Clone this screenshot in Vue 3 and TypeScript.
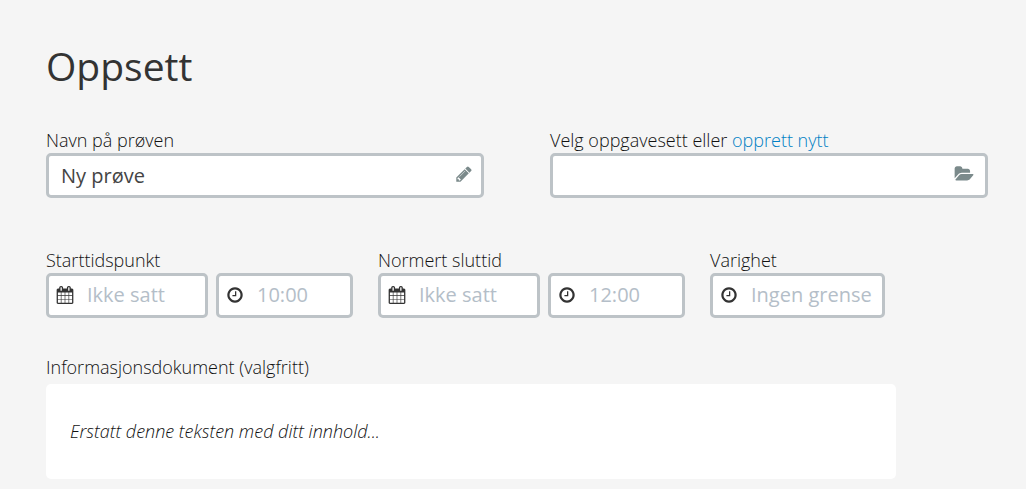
<script setup lang="ts">
import { ref } from 'vue'

interface TimeGroup {
  id: string
  label: string
  date: string
  time: string
}

const testName = ref('Ny prøve')
const taskSet = ref('')
const duration = ref('')
const intro = ref('Erstatt denne teksten med ditt innhold...')

const groups: TimeGroup[] = [
  { id: 'start', label: 'Starttidspunkt', date: 'Ikke satt', time: '10:00' },
  { id: 'end', label: 'Normert sluttid', date: 'Ikke satt', time: '12:00' },
]

const calendarPath =
  'M192 1664h288v-288h-288v288zm352 0h320v-288h-320v288zm-352-352h288v-320h-288v320zm352 0h320v-320h-320v320zm-352-384h288v-288h-288v288zm736 736h320v-288h-320v288zm-384-736h320v-288h-320v288zm768 736h288v-288h-288v288zm-384-352h320v-320h-320v320zm-352-864v-288q0-13-9.5-22.5t-22.5-9.5h-64q-13 0-22.5 9.5t-9.5 22.5v288q0 13 9.5 22.5t22.5 9.5h64q13 0 22.5-9.5t9.5-22.5zm736 864h288v-320h-288v320zm-384-384h320v-288h-320v288zm384 0h288v-288h-288v288zm32-480v-288q0-13-9.5-22.5t-22.5-9.5h-64q-13 0-22.5 9.5t-9.5 22.5v288q0 13 9.5 22.5t22.5 9.5h64q13 0 22.5-9.5t9.5-22.5zm384-64v1280q0 52-38 90t-90 38h-1408q-52 0-90-38t-38-90v-1280q0-52 38-90t90-38h128v-96q0-66 47-113t113-47h64q66 0 113 47t47 113v96h384v-96q0-66 47-113t113-47h64q66 0 113 47t47 113v96h128q52 0 90 38t38 90z'
const clockPath =
  'M1024 544v448q0 14-9 23t-23 9h-320q-14 0-23-9t-9-23v-64q0-14 9-23t23-9h224v-352q0-14 9-23t23-9h64q14 0 23 9t9 23zm416 352q0-148-73-273t-198-198-273-73-273 73-198 198-73 273 73 273 198 198 273 73 273-73 198-198 73-273zm224 0q0 209-103 385.5t-279.5 279.5-385.5 103-385.5-103-279.5-279.5-103-385.5 103-385.5 279.5-279.5 385.5-103 385.5 103 279.5 279.5 103 385.5z'
</script>

<template>
  <main class="page">
    <h1 class="title">Oppsett</h1>

    <form class="form" @submit.prevent>
      <div class="columns">
        <div class="field">
          <label class="label" for="test-name">Navn på prøven</label>
          <div class="box box-wide">
            <input id="test-name" v-model="testName" class="input" type="text" />
            <svg class="icon icon-muted" viewBox="0 0 1792 1792" aria-hidden="true">
              <path d="M491 1536l91-91-235-235-91 91v107h128v128h107zm523-928q0-22-22-22-10 0-17 7l-542 542q-7 7-7 17 0 22 22 22 10 0 17-7l542-542q7-7 7-17zm-54-192l416 416-832 832h-416v-416zm683 96q0 53-37 90l-166 166-416-416 166-165q36-38 90-38 53 0 91 38l235 234q37 39 37 91z" />
            </svg>
          </div>
        </div>
        <div class="field">
          <div class="label">
            <label for="task-set">Velg oppgavesett eller</label>
            {{ ' ' }}<a class="link" href="#new">opprett nytt</a>
          </div>
          <div class="box box-wide">
            <input id="task-set" v-model="taskSet" class="input" type="text" />
            <svg class="icon icon-muted icon-folder" viewBox="0 0 1991 1792" aria-hidden="true">
              <path d="M1943 952q0 31-31 66l-336 396q-43 51-120.5 86.5t-143.5 35.5h-1088q-34 0-60.5-13t-26.5-43q0-31 31-66l336-396q43-51 120.5-86.5t143.5-35.5h1088q34 0 60.5 13t26.5 43zm-343-344v160h-832q-94 0-197 47.5t-164 119.5l-337 396-5 6q0-4-.5-12.5t-.5-12.5v-960q0-92 66-158t158-66h320q92 0 158 66t66 158v32h544q92 0 158 66t66 158z" />
            </svg>
          </div>
        </div>
      </div>

      <div class="times">
        <div v-for="g in groups" :key="g.id" class="field">
          <label class="label" :for="g.id + '-date'">{{ g.label }}</label>
          <div class="pair">
            <div class="box box-date">
              <svg class="icon" viewBox="0 0 1792 1792" aria-hidden="true"><path :d="calendarPath" /></svg>
              <input :id="g.id + '-date'" class="input" type="text" :placeholder="g.date" />
            </div>
            <div class="box box-time">
              <svg class="icon" viewBox="0 0 1792 1792" aria-hidden="true"><path :d="clockPath" /></svg>
              <input class="input" type="text" :placeholder="g.time" :aria-label="g.label" />
            </div>
          </div>
        </div>
        <div class="field">
          <label class="label" for="duration">Varighet</label>
          <div class="box box-duration">
            <svg class="icon" viewBox="0 0 1792 1792" aria-hidden="true"><path :d="clockPath" /></svg>
            <input id="duration" v-model="duration" class="input" type="text" placeholder="Ingen grense" />
          </div>
        </div>
      </div>

      <div class="field">
        <label class="label" for="intro">Informasjonsdokument (valgfritt)</label>
        <textarea id="intro" v-model="intro" class="editor" rows="1"></textarea>
      </div>
    </form>
  </main>
</template>

<style>
body {
  background: #f5f5f5;
}
</style>

<style scoped>
.page {
  padding: 40px 38px 10px 46px;
  color: #333;
  font-family: 'Open Sans', 'Noto Sans', sans-serif;
  font-size: 18px;
}

.title {
  margin: 0 0 36px;
  font-size: 39px;
  line-height: 52px;
  font-weight: 400;
}

.label {
  display: block;
  color: #111;
  line-height: 25px;
  font-weight: 300;
  white-space: nowrap;
}

.link {
  color: #007fc4;
  text-decoration: none;
}

.columns {
  display: grid;
  grid-template-columns: 1fr 1fr;
  gap: 66px;
  margin-bottom: 50px;
}

.times {
  display: flex;
  gap: 25px;
  margin-bottom: 37px;
}

.pair {
  display: flex;
  gap: 8px;
}

.box {
  display: flex;
  align-items: center;
  box-sizing: border-box;
  height: 45px;
  padding: 0 7px 2px;
  border: 3px solid #bdc3c7;
  border-radius: 5px;
  background: #fff;
}

.box-wide {
  padding: 0 8px 0 12px;
}

.box-date {
  width: 162px;
}

.box-time {
  width: 137px;
}

.box-duration {
  width: 175px;
}

.box:focus-within {
  border-color: #1490d0;
}

.input {
  flex: 1;
  min-width: 0;
  padding: 0;
  border: 0;
  outline: 0;
  background: transparent;
  color: #444;
  font-family: inherit;
  font-size: 20px;
  line-height: 28px;
}

.input::placeholder {
  color: #b4bec8;
  opacity: 1;
}

.icon {
  flex: none;
  width: 18px;
  height: 18px;
  fill: #333;
}

.icon + .input {
  margin-left: 13px;
}

.icon-muted {
  margin-bottom: 4px;
  fill: #7b8a8b;
}

.icon-folder {
  width: 20px;
  margin-right: 3px;
}

.editor {
  display: block;
  box-sizing: border-box;
  width: 850px;
  max-width: 100%;
  margin-top: 4px;
  padding: 35px 24px;
  border: 0;
  border-radius: 5px;
  outline: 0;
  background: #fff;
  color: #111;
  font-family: inherit;
  font-size: 18px;
  font-style: italic;
  font-weight: 300;
  line-height: 25px;
  resize: none;
  overflow: hidden;
}
</style>
